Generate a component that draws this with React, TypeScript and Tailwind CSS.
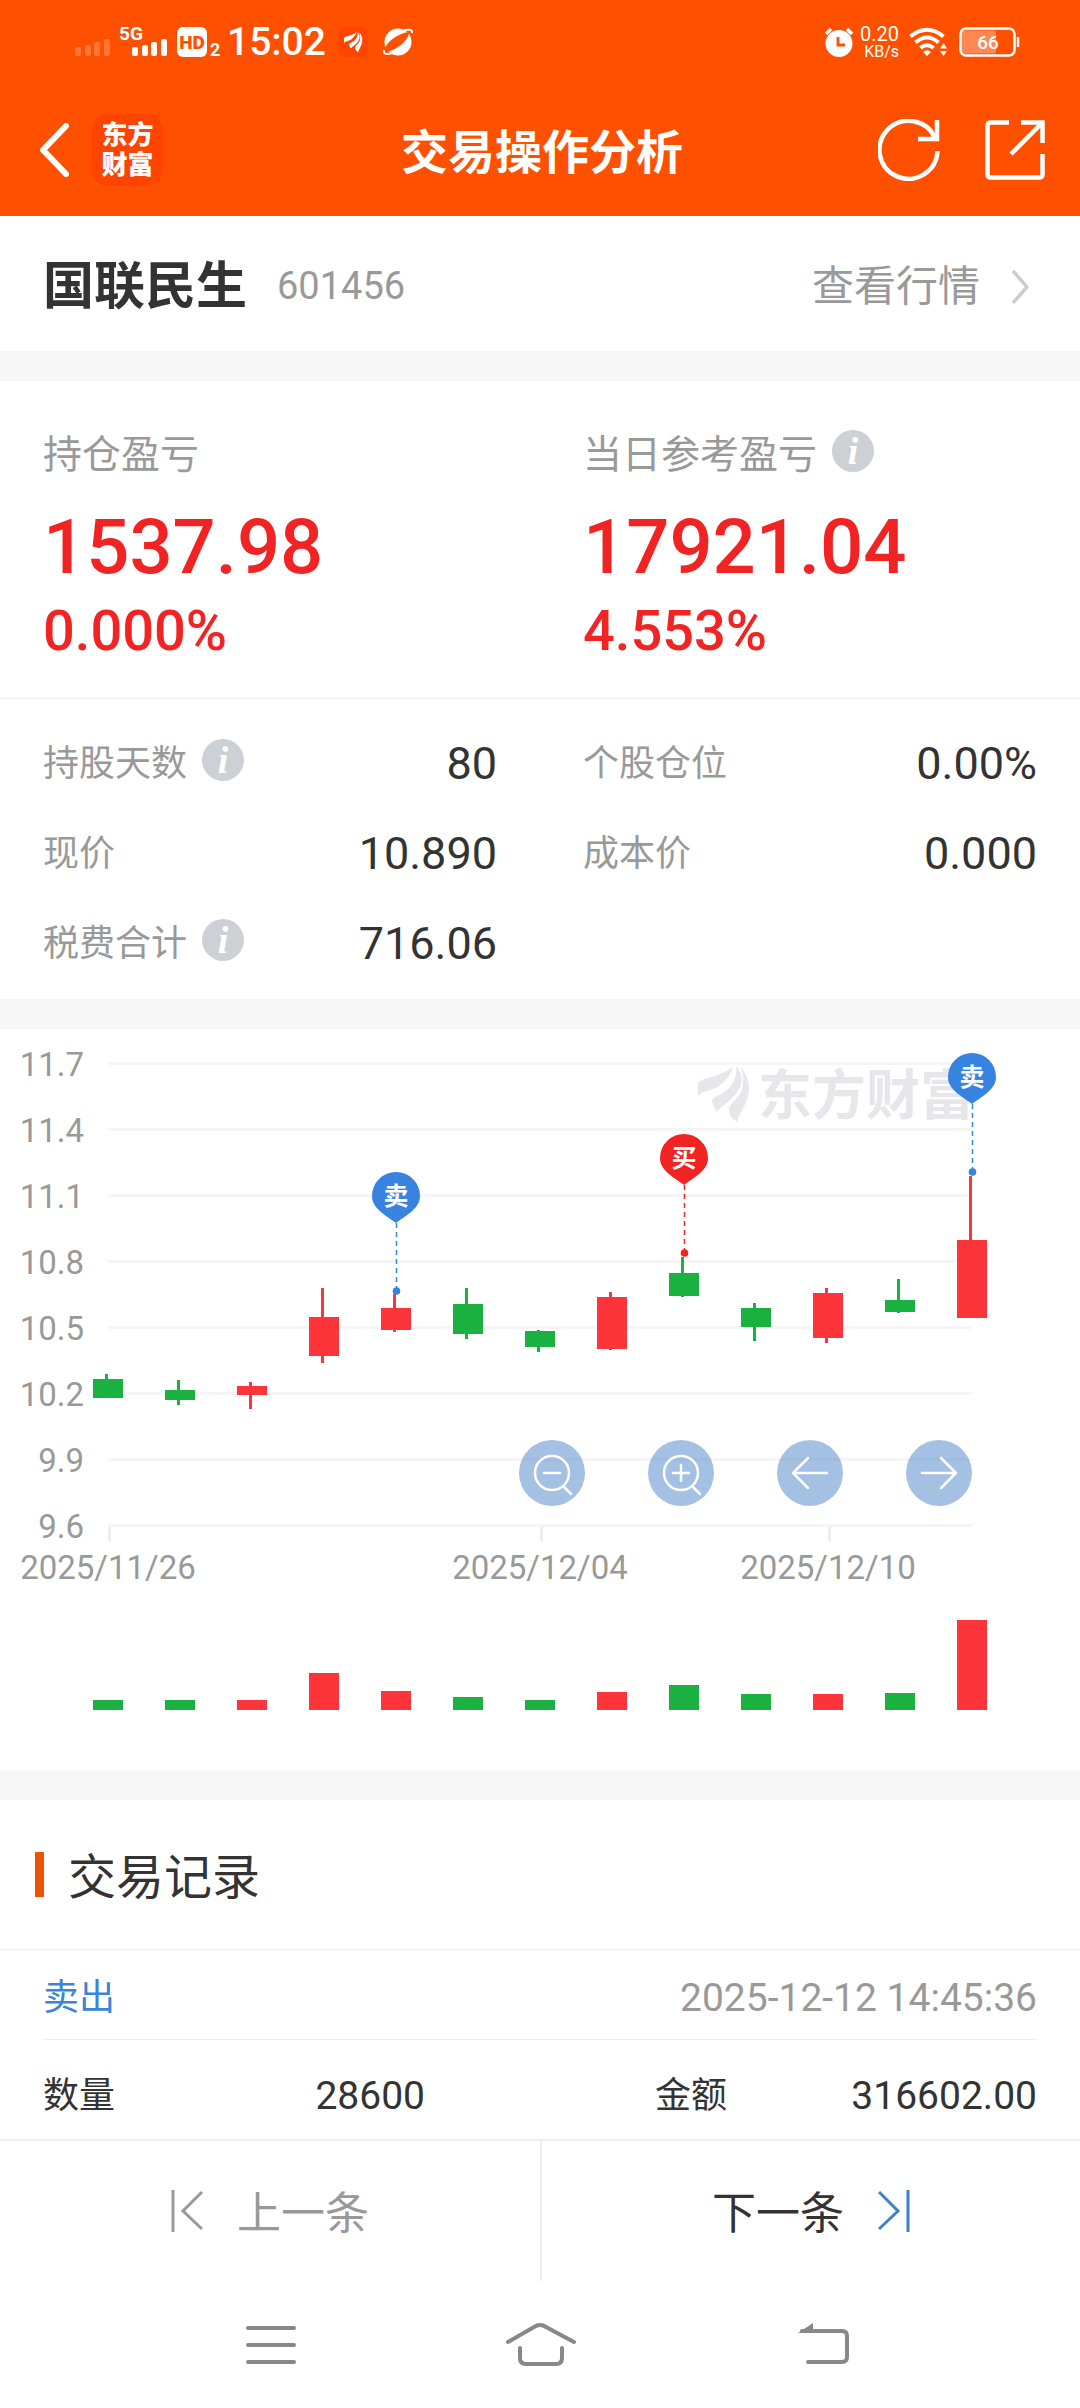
import type { ReactNode } from "react";

type Candle = {
  up: boolean;
  high: number;
  top: number;
  bottom: number;
  low: number;
  volume: number;
};

// chart units, measured down from the top of the chart
const candles: Candle[] = [
  { up: false, high: 345, top: 350, bottom: 369, low: 369, volume: 10 },
  { up: false, high: 351, top: 361, bottom: 371, low: 376, volume: 10 },
  { up: true, high: 353, top: 357, bottom: 366, low: 380, volume: 10 },
  { up: true, high: 259, top: 288, bottom: 327, low: 334, volume: 37 },
  { up: true, high: 265, top: 279, bottom: 301, low: 303, volume: 19 },
  { up: false, high: 259, top: 275, bottom: 305, low: 310, volume: 13 },
  { up: false, high: 301, top: 302, bottom: 318, low: 323, volume: 10 },
  { up: true, high: 263, top: 268, bottom: 320, low: 321, volume: 18 },
  { up: false, high: 228, top: 244, bottom: 267, low: 268, volume: 25 },
  { up: false, high: 274, top: 279, bottom: 298, low: 312, volume: 16 },
  { up: true, high: 259, top: 264, bottom: 309, low: 314, volume: 16 },
  { up: false, high: 250, top: 271, bottom: 283, low: 284, volume: 17 },
  { up: true, high: 147, top: 211, bottom: 289, low: 289, volume: 90 }
];

const prices = ["11.7", "11.4", "11.1", "10.8", "10.5", "10.2", "9.9", "9.6"];

const dates = [
  { index: 0, label: "2025/11/26" },
  { index: 6, label: "2025/12/04" },
  { index: 10, label: "2025/12/10" }
];

const trades = [
  { index: 4, y: 143, label: "卖", color: "#3783e0" },
  { index: 8, y: 105, label: "买", color: "#f12323" },
  { index: 12, y: 24, label: "卖", color: "#3783e0" }
];

const details = [
  { label: "持股天数", value: "80", info: true },
  { label: "个股仓位", value: "0.00%" },
  { label: "现价", value: "10.890" },
  { label: "成本价", value: "0.000" },
  { label: "税费合计", value: "716.06", info: true }
];

const candleX = (index: number) => 108 + index * 72;

function Feathers() {
  return (
    <>
      <path d="M0 30V17C2 12 26 10 34 1C35 5 28 15 21 20C15 25 5 24 0 30Z" />
      <path d="M38 0C46 8 45 20 37 29C31 36 23 40 19 46C17 42 14 38 14 34C18 29 27 28 32 21C37 14 39 8 38 0Z" />
      <path d="M42 1C51 10 53 23 49 33C46 42 41 49 39 56C35 53 30 49 31 43C32 37 41 32 44 24C46 16 46 8 42 1Z" />
    </>
  );
}

function SignalBars({ x = 0 }: { x?: number }) {
  return (
    <>
      <rect x={x} y="22" width="6" height="9" rx="2" />
      <rect x={x + 10} y="20" width="6" height="11" rx="2" />
      <rect x={x + 19} y="17" width="6" height="14" rx="2" />
      <rect x={x + 29} y="14" width="6" height="17" rx="2" />
    </>
  );
}

function StatusBar() {
  return (
    <div className="flex items-center justify-between pt-6 pr-[60px] pb-6 pl-[75px]">
      <div className="flex items-center">
        <svg className="h-[34px] w-[35px]" viewBox="0 0 35 34" fill="#fff" opacity="0.22">
          <SignalBars />
        </svg>
        <svg className="ml-[9px] h-[34px] w-12 overflow-visible" viewBox="0 0 48 34" fill="#fff">
          <text x="0" y="15" fontSize="19" fontWeight="700">5G</text>
          <SignalBars x={13} />
        </svg>
        <svg className="ml-[10px] h-[34px] w-11 overflow-visible" viewBox="0 0 44 34" fill="#fff">
          <rect y="2" width="30" height="30" rx="6" />
          <text x="15" y="24" fontSize="19" fontWeight="900" fill="#ff5000" textAnchor="middle">HD</text>
          <text x="33" y="31" fontSize="18" fontWeight="700">2</text>
        </svg>
        <span className="ml-1.5 text-[39px] leading-[34px] font-medium">15:02</span>
        <svg className="ml-3 size-[30px]" viewBox="0 0 30 30">
          <rect width="30" height="30" rx="7" fill="#ff4400" />
          <g transform="translate(6 5) scale(.36)" fill="#fff">
            <Feathers />
          </g>
        </svg>
        <svg className="ml-[15px] h-7 w-[30px]" viewBox="0 0 30 28">
          <circle cx="15" cy="14" r="13.5" fill="#fff" />
          <path d="M2 21C3 14 16 5 26 4C26 12 14 22 3 24Z" fill="#ff5000" />
          <path d="M19 3C25 1 30 1 29 5M1 22C0 26 4 27 9 25" fill="none" stroke="#fff" strokeWidth="2" />
        </svg>
      </div>
      <div className="flex items-center">
        <svg className="h-[30px] w-[30px]" viewBox="0 0 30 30">
          <circle cx="15" cy="16.5" r="13.5" fill="#fff" />
          <path d="M2 7L7 2M28 7L23 2" stroke="#fff" strokeWidth="3.5" />
          <path d="M14 10V18H21" fill="none" stroke="#ff5000" strokeWidth="2.8" />
        </svg>
        <div className="ml-1.5 flex w-[39px] flex-col items-end">
          <span className="text-[20px] leading-[20px]">0.20</span>
          <span className="text-[16px] leading-[16px]">KB/s</span>
        </div>
        <svg className="ml-2.5 h-[30px] w-[39px]" viewBox="0 0 39 30" fill="none" stroke="#fff">
          <path d="M1.500 9.500Q18 -4 34.500 9.500" strokeWidth="4" />
          <path d="M6.500 15.500Q18 5.500 29.500 15.500" strokeWidth="4" />
          <path d="M11.500 21Q18 15.500 24.500 21" strokeWidth="4" />
          <path d="M14 25Q18 21.500 22 25L18 29Z" fill="#fff" stroke="none" />
          <path d="M34.500 16L38 21.500H31ZM34.500 29L38 24H31Z" fill="#fff" stroke="none" />
        </svg>
        <svg className="ml-[11px] h-[30px] w-[61px]" viewBox="0 0 61 30">
          <rect x="1.500" y="1.500" width="54" height="27" rx="5.500" fill="none" stroke="#fff" strokeWidth="2.500" />
          <rect x="3" y="3.500" width="34" height="23" rx="2" fill="#fff" opacity="0.32" />
          <path d="M59 10V20" stroke="#fff" strokeWidth="2.500" />
          <text x="29" y="22" fontSize="19" fontWeight="500" fill="#fff" textAnchor="middle">66</text>
        </svg>
      </div>
    </div>
  );
}

function AppBar() {
  return (
    <div className="grid grid-cols-[1fr_auto_1fr] items-center pt-[30px] pr-[35px] pb-[30px] pl-[39px]">
      <div className="flex items-center gap-[23px]">
        <button aria-label="返回">
          <svg className="h-[54px] w-[30px]" viewBox="0 0 30 54" fill="none" stroke="#fff" strokeWidth="6">
            <path d="M27 3L4 27L27 51" strokeLinecap="round" strokeLinejoin="round" />
          </svg>
        </button>
        <div className="w-[71px] rounded-[16px] bg-[#ff4400] py-1.5 text-center text-[26px] leading-[30px] font-black">
          东方
          <br />
          财富
        </div>
      </div>
      <h1 className="pt-1.5 text-[47px] leading-[66px] font-bold">交易操作分析</h1>
      <div className="flex items-center justify-end gap-[45px]">
        <button aria-label="刷新">
          <svg className="size-[62px]" viewBox="0 0 62 62" fill="none" stroke="#fff" strokeWidth="4.5">
            <path d="M59.500 32A29 29 0 1 1 57 19" />
            <path d="M59 1V20H40" />
          </svg>
        </button>
        <button aria-label="分享">
          <svg className="size-[60px]" viewBox="0 0 60 60" fill="none" stroke="#fff" strokeWidth="4.5">
            <path d="M24 2.500H6Q2.500 2.500 2.500 6V54Q2.500 57.500 6 57.500H54Q57.500 57.500 57.500 54V34" />
            <path d="M36 2.500H57.500V23M57 3L26 34" />
          </svg>
        </button>
      </div>
    </div>
  );
}

function InfoButton({ label }: { label: string }) {
  return (
    <button
      aria-label={`${label}说明`}
      className="mb-2 size-[42px] rounded-full bg-[#cdd1d6] text-center font-['Liberation_Serif',serif] text-[38px] leading-[40px] font-bold text-white italic"
    >
      i
    </button>
  );
}

function Profit({ label, amount, percent, info }: { label: string; amount: string; percent: string; info?: boolean }) {
  return (
    <div className="px-[43px]">
      <div className="flex items-center gap-[15px] text-[39px] leading-[56px] text-[#999]">
        {label}
        {info && <InfoButton label={label} />}
      </div>
      <p className="mt-5 text-[76px] leading-[88px] font-medium text-[#f12323]">{amount}</p>
      <p className="mt-2 text-[56px] leading-[64px] font-medium text-[#f12323]">{percent}</p>
    </div>
  );
}

function RoundButton({ label, children }: { label: string; children: ReactNode }) {
  return (
    <button aria-label={label} className="size-[66px] rounded-full bg-[#4983c7]/50">
      <svg viewBox="0 0 66 66" fill="none" stroke="#fff" strokeWidth="2.5" strokeLinecap="round">
        {children}
      </svg>
    </button>
  );
}

function PriceChart() {
  return (
    <section className="relative">
      <svg className="block h-auto w-full" viewBox="0 0 1080 741" role="img" aria-label="K线图">
        {prices.map((price, i) => (
          <g key={price}>
            <path d={`M108 ${34.5 + i * 66}H972`} stroke="#f5f5f5" strokeWidth="3" />
            <text x="84" y={47 + i * 66} fontSize="33" fill="#999" textAnchor="end">{price}</text>
          </g>
        ))}
        {dates.map((date) => (
          <g key={date.label}>
            <path d={`M${candleX(date.index) + 1.5} 498V512`} stroke="#eee" strokeWidth="3" />
            <text x={candleX(date.index)} y="550" fontSize="33" fill="#999" textAnchor="middle">{date.label}</text>
          </g>
        ))}

        {/* watermark */}
        <g fill="#e6e6eb">
          <g transform="translate(698 37)">
            <Feathers />
          </g>
          <text x="758" y="86" fontSize="54" fontWeight="700">东方财富</text>
        </g>

        {candles.map((candle, i) => (
          <g key={i} fill={candle.up ? "#fd3439" : "#1bb140"}>
            <rect x={candleX(i) - 3} y={candle.high} width="3" height={candle.low - candle.high} />
            <rect x={candleX(i) - 15} y={candle.top} width="30" height={candle.bottom - candle.top} />
            <rect x={candleX(i) - 15} y={681 - candle.volume} width="30" height={candle.volume} />
          </g>
        ))}

        {trades.map((trade) => (
          <g key={trade.index} transform={`translate(${candleX(trade.index)} ${trade.y})`} fill={trade.color}>
            <path d="M0 0A24 24 0 0 1 24 24C24 36 12 42 0 51C-12 42 -24 36 -24 24A24 24 0 0 1 0 0Z" />
            <path d="M.5 51V116" stroke={trade.color} strokeWidth="1.500" strokeDasharray="5 4" />
            <circle cx=".5" cy="119" r="3.800" />
            <text y="33" fontSize="25" fontWeight="700" fill="#fff" textAnchor="middle">{trade.label}</text>
          </g>
        ))}
      </svg>

      <div className="absolute top-[411px] right-[10%] flex gap-[63px]">
        <RoundButton label="缩小">
          <circle cx="33" cy="33" r="17" />
          <path d="M25 33H41M45 47L52 54" />
        </RoundButton>
        <RoundButton label="放大">
          <circle cx="33" cy="33" r="17" />
          <path d="M25 33H41M33 25V41M45 47L52 54" />
        </RoundButton>
        <RoundButton label="向左">
          <path d="M50 33H16M31 18L16 33L31 48" />
        </RoundButton>
        <RoundButton label="向右">
          <path d="M16 33H50M35 18L50 33L35 48" />
        </RoundButton>
      </div>
    </section>
  );
}

function TradeRecords() {
  return (
    <section>
      <div className="flex items-center gap-6 border-b border-[#eee] py-[38px] pl-[35px]">
        <span className="h-[45px] w-[9px] bg-[#ea5504]" />
        <h2 className="pt-1.5 text-[48px] leading-[67px] text-[#333]">交易记录</h2>
      </div>
      <div className="px-[43px]">
        <div className="flex items-center justify-between border-b border-[#eee] pt-[22px] pb-[14px] leading-[53px]">
          <span className="text-[36px] text-[#3883dc]">卖出</span>
          <time className="text-[39px] text-[#999]">2025-12-12 14:45:36</time>
        </div>
        <dl className="grid grid-cols-2 gap-x-[230px] pt-[30px] pb-4 leading-[53px] text-[#333]">
          <div className="flex items-center justify-between">
            <dt className="text-[36px]">数量</dt>
            <dd className="text-[39px]">28600</dd>
          </div>
          <div className="flex items-center justify-between">
            <dt className="text-[36px]">金额</dt>
            <dd className="text-[39px]">316602.00</dd>
          </div>
        </dl>
      </div>
    </section>
  );
}

function Pager() {
  return (
    <div className="grid grid-cols-2 border-t-2 border-[#eee] text-[44px] leading-[54px]">
      <button className="flex items-center justify-center gap-[34px] py-10 text-[#999]">
        <svg className="h-[42px] w-8" viewBox="0 0 32 42" fill="none" stroke="currentColor" strokeWidth="3">
          <path d="M2 0V42M31 2L12 21L31 39" />
        </svg>
        <span className="pt-1.5">上一条</span>
      </button>
      <button className="flex items-center justify-center gap-[34px] border-l-2 border-[#eee] py-10 text-[#333]">
        <span className="pt-1.5">下一条</span>
        <svg className="h-[42px] w-8" viewBox="0 0 32 42" fill="none" stroke="#3d80cc" strokeWidth="3">
          <path d="M30 0V42M1 2L20 21L1 39" />
        </svg>
      </button>
    </div>
  );
}

function SystemNav() {
  return (
    <nav className="flex justify-between px-[230px] pt-[41px] pb-[40px]">
      <button aria-label="最近任务">
        <svg className="h-[46px] w-20" viewBox="0 0 80 46" stroke="#888" strokeWidth="4" strokeLinecap="round">
          <path d="M18 6H64M18 23H64M18 40H64" />
        </svg>
      </button>
      <button aria-label="主屏幕">
        <svg className="h-[46px] w-20" viewBox="0 0 80 46" fill="none" stroke="#888" strokeWidth="4" strokeLinecap="round">
          <path d="M8 20L34 5Q40 1 46 5L74 20M20 26V36Q20 42 26 42H56Q62 42 62 36V26" />
        </svg>
      </button>
      <button aria-label="返回上级">
        <svg className="h-[46px] w-20" viewBox="0 0 80 46" fill="none" stroke="#888" strokeWidth="4" strokeLinecap="round">
          <path d="M32 9H72Q77 9 77 14V35Q77 40 72 40H38" />
          <path d="M28 11L43 1V9L40 11Z" fill="#888" stroke="none" />
        </svg>
      </button>
    </nav>
  );
}

export default function App() {
  return (
    <div className="w-full bg-white font-['Roboto','Noto_Sans_CJK_SC',sans-serif]">
      <header className="bg-[#ff5000] text-white">
        <StatusBar />
        <AppBar />
      </header>

      <main>
        <section className="flex items-center justify-between border-b-[30px] border-[#f7f7f7] pt-[33px] pr-[51px] pb-[27px] pl-[43px]">
          <div className="flex items-center gap-[30px]">
            <h2 className="text-[51px] leading-[75px] font-bold text-[#333]">国联民生</h2>
            <span className="text-[38px] text-[#999]">601456</span>
          </div>
          <a href="#quote" className="flex items-center gap-8 text-[42px] leading-[75px] text-[#999]">
            查看行情
            <svg className="h-[34px] w-[17px]" viewBox="0 0 17 34" fill="none" stroke="#ccc" strokeWidth="3.5">
              <path d="M1 1L15 17L1 33" />
            </svg>
          </a>
        </section>

        <section className="border-b-[30px] border-[#f7f7f7]">
          <div className="grid grid-cols-2 border-b border-[#eee] pt-[46px] pb-[35px]">
            <Profit label="持仓盈亏" amount="1537.98" percent="0.000%" />
            <Profit label="当日参考盈亏" amount="17921.04" percent="4.553%" info />
          </div>
          <dl className="grid grid-cols-2 pt-5 pb-2.5">
            {details.map((item) => (
              <div key={item.label} className="flex items-center justify-between px-[43px] py-4 leading-[58px]">
                <dt className="flex items-center gap-[15px] text-[36px] text-[#999]">
                  {item.label}
                  {item.info && <InfoButton label={item.label} />}
                </dt>
                <dd className="text-[45px] text-[#333]">{item.value}</dd>
              </div>
            ))}
          </dl>
        </section>

        <PriceChart />
        <div className="h-[30px] bg-[#f7f7f7]" />
        <TradeRecords />
      </main>

      <footer>
        <Pager />
        <SystemNav />
      </footer>
    </div>
  );
}
